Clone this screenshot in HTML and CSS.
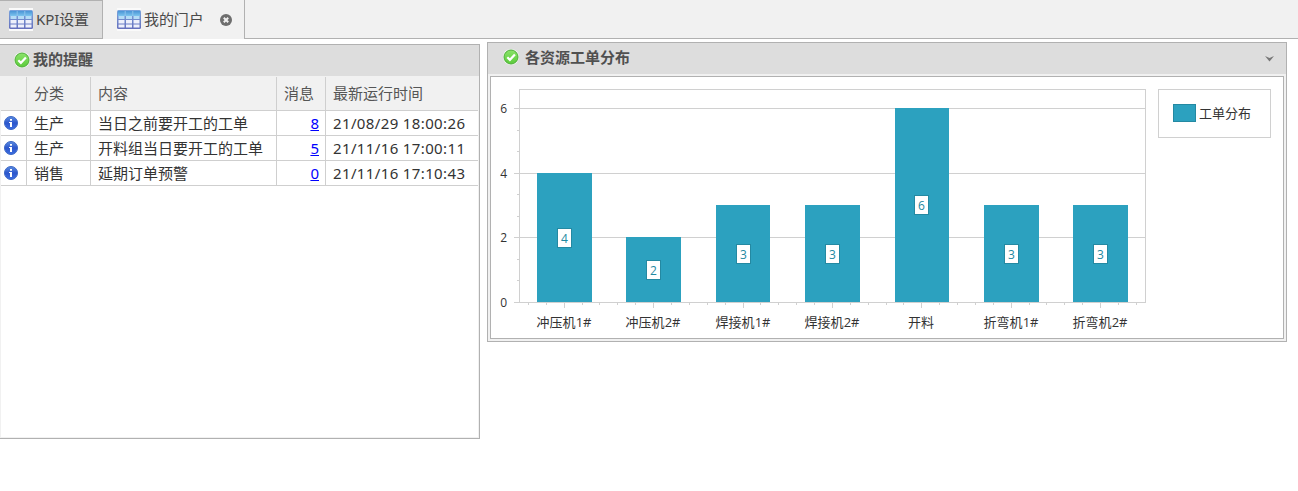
FILE: index.html
```html
<!DOCTYPE html>
<html lang="zh-CN">
<head>
<meta charset="utf-8">
<title>我的门户</title>
<link rel="stylesheet" href="styles.css">
</head>
<body>
<svg class="defs" width="0" height="0" aria-hidden="true">
  <defs>
    <linearGradient id="gHead" x1="0" y1="0" x2="0" y2="1"><stop offset="0" stop-color="#4a94d6"/><stop offset="1" stop-color="#7cc4ee"/></linearGradient>
    <linearGradient id="gBody" x1="0" y1="0" x2="0" y2="1"><stop offset="0" stop-color="#7aa4dc"/><stop offset="1" stop-color="#6670bd"/></linearGradient>
    <linearGradient id="gOk" x1="0" y1="0" x2="0" y2="1"><stop offset="0" stop-color="#8be36a"/><stop offset="1" stop-color="#5bcb3a"/></linearGradient>
    <linearGradient id="gInfo" x1="0" y1="0" x2="0" y2="1"><stop offset="0" stop-color="#5b8de0"/><stop offset=".5" stop-color="#2c56cc"/><stop offset="1" stop-color="#3d6fe0"/></linearGradient>
    <symbol id="grid" viewBox="0 0 24 23">
      <rect width="24" height="23" fill="#fafafa"/>
      <rect x="0" y="2" width="24" height="19" rx="1.5" fill="url(#gBody)"/>
      <rect x="1" y="3" width="22" height="5" fill="url(#gHead)"/>
      <path d="M1.500 8h6v3h-6zM9 8h6v3H9zM16.500 8h6v3h-6z" fill="#b5dcf6"/>
      <path d="M1.500 12h6v3.500h-6zM9 12h6v3.500H9zM16.500 12h6v3.500h-6zM1.500 16.500h6v3h-6zM9 16.500h6v3H9zM16.500 16.500h6v3h-6z" fill="#eef0fb"/>
      <path d="M8.200 3v5M15.800 3v5" stroke="#8dc3ec" stroke-width="1"/>
    </symbol>
    <symbol id="ok" viewBox="0 0 16 16">
      <circle cx="8" cy="8" r="8" fill="#f4f8f2"/>
      <circle cx="8" cy="8" r="7" fill="url(#gOk)" stroke="#4fae3b"/>
      <path d="M4.300 8.200l2.600 2.600 5-5.300" fill="none" stroke="#fff" stroke-width="2.200"/>
    </symbol>
    <symbol id="info" viewBox="0 0 14 14">
      <circle cx="7" cy="7" r="6.500" fill="url(#gInfo)" stroke="#3b66c4"/>
      <path d="M6 3h2v1.700H6zM5 6h3v5H6V7H5z" fill="#fff"/>
    </symbol>
  </defs>
</svg>

<nav class="tabs">
  <div class="tab"><svg class="tab-icon"><use href="#grid"/></svg><span>KPI设置</span></div>
  <div class="tab active"><svg class="tab-icon"><use href="#grid"/></svg><span>我的门户</span>
    <svg class="close" viewBox="0 0 12 12"><circle cx="6" cy="6" r="6" fill="#6e6e6e"/><path d="M3.800 3.800l4.400 4.400M8.200 3.800L3.800 8.200" stroke="#f1f1f1" stroke-width="2"/></svg>
  </div>
  <div class="tab-rest"></div>
</nav>

<main class="portal">
  <section class="reminders">
    <h2 class="title"><svg class="ok"><use href="#ok"/></svg><span>我的提醒</span></h2>
    <div class="body">
      <div class="row head"><span></span><span>分类</span><span>内容</span><span>消息</span><span>最新运行时间</span></div>
      <div class="row"><span class="ic"><svg class="info"><use href="#info"/></svg></span><span>生产</span><span>当日之前要开工的工单</span><span class="num"><a href="#">8</a></span><span class="time">21/08/29 18:00:26</span></div>
      <div class="row"><span class="ic"><svg class="info"><use href="#info"/></svg></span><span>生产</span><span>开料组当日要开工的工单</span><span class="num"><a href="#">5</a></span><span class="time">21/11/16 17:00:11</span></div>
      <div class="row"><span class="ic"><svg class="info"><use href="#info"/></svg></span><span>销售</span><span>延期订单预警</span><span class="num"><a href="#">0</a></span><span class="time">21/11/16 17:10:43</span></div>
    </div>
  </section>

  <section class="chart-panel">
    <h2 class="title"><svg class="ok"><use href="#ok"/></svg><span>各资源工单分布</span><svg class="arrow" viewBox="0 0 9 6"><path d="M0 0l4.500 2L9 0 4.500 5.500z" fill="#777"/></svg></h2>
    <div class="chart-frame">
      <svg id="chart" class="chart" viewBox="491 77 792 261" width="792" height="261"></svg>
    </div>
  </section>
</main>
<script src="chart.js"></script>
</body>
</html>
```
FILE: styles.css
```css
* { box-sizing: border-box; }
body {
  margin: 0;
  background: #fff;
  color: #333;
  font: 15px/20px "Noto Sans", "Noto Sans CJK SC", sans-serif;
}
.defs { position: absolute; }
.tabs { display: flex; height: 39px; }
.tab {
  display: flex;
  align-items: center;
  width: 103px;
  padding-left: 9px;
  background: #ddd;
  border: solid #b1b1b1;
  border-width: 1px 1px 1px 0;
  color: #4a4a4a;
  font-size: 15px;
  letter-spacing: -0.1px;
  white-space: nowrap;
}
.tab span { padding-bottom: 2px; }
.tab.active {
  width: 142px;
  padding-left: 14px;
  background: #f1f1f1;
  border-width: 0 1px 0 0;
}
.tab-icon { width: 24px; height: 23px; margin-right: 3px; flex: none; }
.close { width: 12px; height: 12px; margin-left: 16px; }
.tab-rest { flex: 1; background: #f1f1f1; border-bottom: 1px solid #b1b1b1; }
.portal { display: flex; align-items: flex-start; gap: 7px; padding-top: 3px; }
.title {
  display: flex;
  align-items: center;
  height: 31px;
  margin: 0;
  padding-left: 14px;
  background: #ddd;
  color: #505050;
  font-size: 15px;
  font-weight: 700;
}
.title span { padding-bottom: 3px; }
.ok { width: 16px; height: 16px; margin-right: 3px; margin-top: -2px; }
.reminders {
  width: 480px;
  height: 395px;
  margin-top: 2px;
  border: solid #b1b1b1;
  border-width: 1px 1px 1px 0;
}
.body { height: 362px; border: solid #f1f1f1; border-width: 0 1px 1px; }
.row {
  display: grid;
  grid-template-columns: 26px 64px 186px 49px 1fr;
  height: 25px;
  border-bottom: 1px solid #cfcfcf;
  line-height: 24px;
  white-space: nowrap;
}
.row > span { padding-left: 7px; border-right: 1px solid #cfcfcf; }
.row > span:last-child { border-right: 0; }
.row.head { height: 35px; padding-top: 1px; line-height: 33px; background: #f1f1f1; color: #555; }
.row > .ic { display: flex; align-items: center; padding-left: 3px; }
.info { width: 14px; height: 14px; }
.time { letter-spacing: 0.37px; }
.num { padding-right: 6px; text-align: right; }
.num a { color: #00f; }
.chart-panel {
  width: 800px;
  height: 300px;
  background: #f1f1f1;
  border: 1px solid #b1b1b1;
}
.chart-panel .title { padding-left: 15px; padding-right: 12px; }
.chart-panel .ok { margin-right: 6px; margin-top: -4px; }
.arrow { width: 9px; height: 6px; margin-left: auto; margin-top: 1px; }
.chart-frame { margin: 2px; border: 1px solid #b1b1b1; background: #fff; }
.chart { display: block; font: 13px "Open Sans", "Noto Sans CJK SC", sans-serif; fill: #333; }
.line { stroke: #d0d0d0; fill: none; shape-rendering: crispEdges; }
.bar { fill: #2ca1bf; shape-rendering: crispEdges; }
.swatch { fill: #2ca1bf; stroke: #2489a2; }
.tag { fill: #fff; stroke: #2489a2; }
.value { fill: #2489a2; text-anchor: middle; font-size: 12px; }
.cat { text-anchor: middle; }
.axis { text-anchor: end; font-size: 12px; }
```
FILE: chart.js
```js
const data = [
  ['冲压机1#', 4], ['冲压机2#', 2], ['焊接机1#', 3], ['焊接机2#', 3],
  ['开料', 6], ['折弯机1#', 3], ['折弯机2#', 3]
];
const tops = { 0: 302, 2: 237, 3: 205, 4: 173, 6: 108 };
const step = 89.4;
let out = '';
const line = (x1, y1, x2, y2) => { out += `<path class="line" d="M${x1} ${y1}L${x2} ${y2}"/>`; };

// plot frame, horizontal grid and value axis
out += '<rect class="line" x="519.5" y="89.5" width="626" height="213"/>';
[0, 2, 4, 6].forEach(v => {
  line(514, tops[v] + 0.5, 1146, tops[v] + 0.5);
  out += `<text class="axis" x="507" y="${tops[v] + 5}">${v}</text>`;
});
[130, 151, 194, 216, 259, 280].forEach(y => line(517, y + 0.5, 519, y + 0.5));

// category axis ticks
for (let i = 0; i < 35; i++) {
  const x = Math.floor(528.44 + i * step / 5) + 0.5;
  line(x, 303, x, i % 5 === 2 ? 308 : 305);
}

// bars with their value tags
data.forEach(([name, v], i) => {
  const c = Math.floor(564.2 + i * step);
  const x = Math.round(537 + i * step);
  const w = Math.round(537 + i * step + 54.6) - x;
  const mid = Math.round((tops[v] + 302) / 2);
  out += `<rect class="bar" x="${x}" y="${tops[v]}" width="${w}" height="${302 - tops[v]}"/>`;
  out += `<rect class="tag" x="${c - 6.5}" y="${mid - 9.5}" width="14" height="19"/>`;
  out += `<text class="value" x="${c + 0.5}" y="${mid + 5}">${v}</text>`;
  out += `<text class="cat" x="${c}" y="327" textLength="${name.length > 2 ? 55 : 26}">${name}</text>`;
});

// legend
out += '<rect class="line" x="1158.5" y="89.5" width="112" height="48"/>';
out += '<rect class="swatch" x="1173.5" y="104.5" width="22" height="17"/>';
out += '<text x="1199" y="118">工单分布</text>';
document.getElementById('chart').innerHTML = out;
```
